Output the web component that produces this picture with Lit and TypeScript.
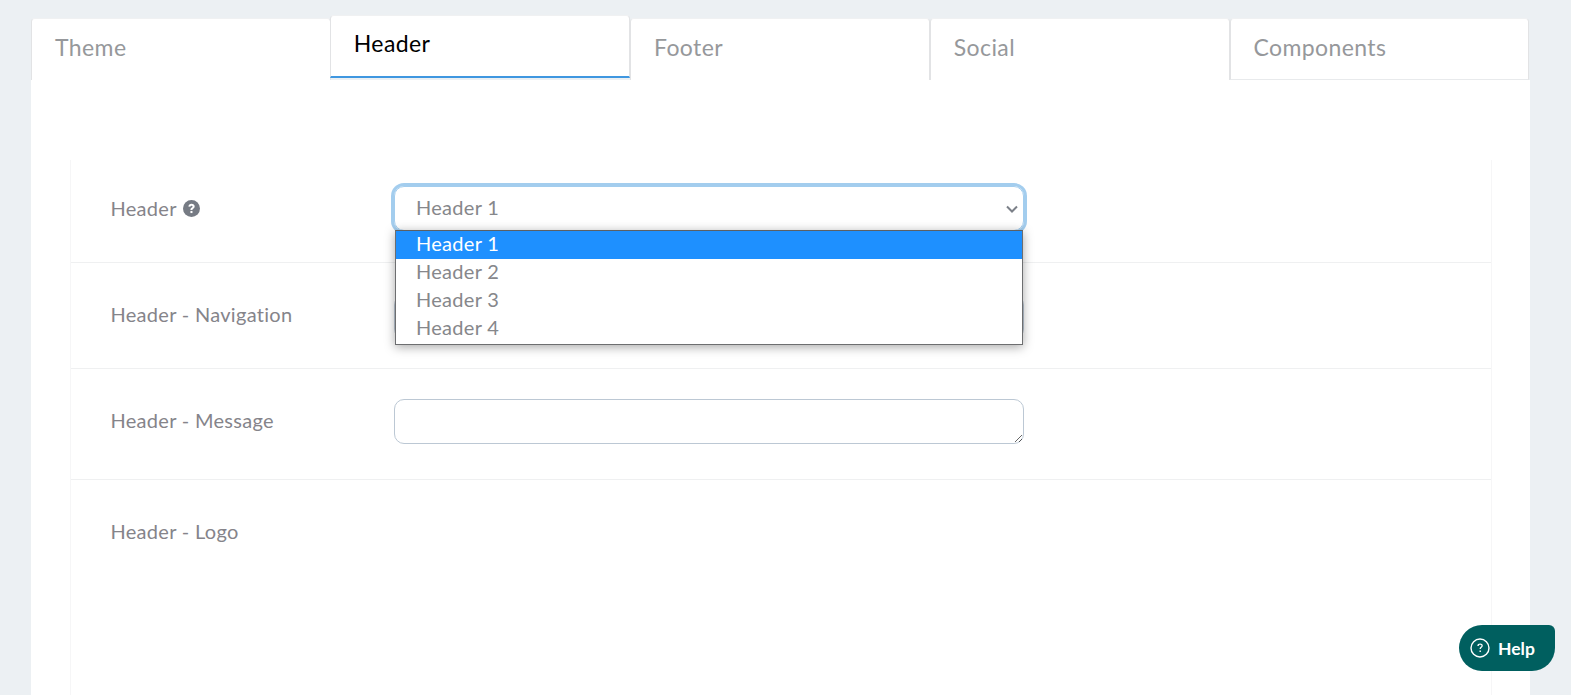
import { LitElement, html, css } from "lit";
import { customElement } from "lit/decorators.js";

const TABS = ["Theme", "Header", "Footer", "Social", "Components"];
const OPTIONS = ["Header 1", "Header 2", "Header 3", "Header 4"];

@customElement("app-root")
export class AppRoot extends LitElement {
  static styles = css`
    :host {
      display: block;
      height: 695px;
      overflow: hidden;
      background: #ecf0f3;
      font-family: Lato, "Open Sans", sans-serif;
      font-size: 20px;
      letter-spacing: 0.3px;
      color: #86878b;
      position: relative;
    }
    .page {
      padding: 15px 41px 0 31px;
    }
    .tabs {
      display: flex;
      align-items: flex-start;
      height: 65px;
    }
    .tab {
      flex: 0 0 299.75px;
      box-sizing: border-box;
      height: 62px;
      margin-top: 3px;
      padding: 14px 23px 0;
      background: #fff;
      border: 1px solid #e2e3e5;
      border-top-color: #f0f1f2;
      border-bottom: 0;
      border-radius: 4px 4px 0 0;
      font-size: 23px;
      letter-spacing: 0.4px;
      color: #96989b;
    }
    .tab.active {
      flex-basis: 300.25px;
      height: 63px;
      margin: 0 0 0 -1px;
      padding-top: 13px;
      color: #000;
      border-bottom: 2px solid #3f97e0;
      position: relative;
    }
    .tab:last-child {
      border-bottom: 1px solid #e8eaec;
    }
    .card {
      background: #fff;
      height: 620px;
      box-sizing: border-box;
      padding: 80px 38px 0 39px;
    }
    .form {
      border-left: 1px solid #f6f6f7;
      border-right: 1px solid #f6f6f7;
      height: 100%;
    }
    .row {
      display: flex;
      box-sizing: border-box;
      border-bottom: 1px solid #eff0f1;
      padding-left: 39.5px;
    }
    .row:last-child {
      border-bottom: 0;
    }
    .r1 { height: 103px; padding-top: 26px; }
    .r2 { height: 106px; padding-top: 32px; }
    .r3 { height: 111px; padding-top: 30px; }
    .r4 { padding-top: 39px; }
    .label {
      flex: 0 0 283.5px;
      display: flex;
      align-items: center;
      gap: 6px;
      height: 44px;
      color: #85848a;
    }
    .r2 .label { height: 38px; }
    .r3 .label { height: 42px; }
    .r4 .label { height: 24px; }
    .field {
      position: relative;
      width: 630px;
      box-sizing: border-box;
    }
    .select {
      box-sizing: border-box;
      height: 45px;
      padding: 0 21px 4px;
      display: flex;
      align-items: center;
      justify-content: space-between;
      border: 1px solid #a3cdee;
      border-radius: 10px;
      box-shadow: 0 0 0 3px #a3cdee;
      color: #86878b;
    }
    .select svg {
      margin: 4px -16px 0 0;
    }
    .plain {
      box-sizing: border-box;
      height: 44px;
      border: 1px solid #bcc8d4;
      border-radius: 10px;
    }
    textarea {
      display: block;
      box-sizing: border-box;
      width: 100%;
      height: 45px;
      margin: 0;
      border: 1px solid #bcc8d4;
      border-radius: 10px;
      outline: none;
      background: #fff;
    }
    .menu {
      position: absolute;
      left: 1px;
      top: 44px;
      width: 628px;
      box-sizing: border-box;
      padding-bottom: 1px;
      background: #fff;
      border: 1px solid #6d6e70;
      border-top-color: #5d6063;
      box-shadow: 0 2px 10px rgba(0, 0, 0, 0.35);
      z-index: 2;
    }
    .opt {
      height: 28px;
      line-height: 25px;
      padding-left: 20px;
      color: #86878b;
    }
    .opt.on {
      background: #1e90ff;
      color: #fff;
    }
    .help {
      position: absolute;
      left: 1459px;
      top: 625px;
      width: 96px;
      height: 46px;
      box-sizing: border-box;
      padding-left: 11px;
      display: flex;
      align-items: center;
      gap: 8px;
      background: #005f5f;
      border-radius: 23px 6px 23px 23px;
      color: #fff;
      font-weight: 700;
      font-size: 17.5px;
      letter-spacing: 0;
    }
  `;

  render() {
    return html`
      <div class="page">
        <div class="tabs">
          ${TABS.map(
            (t) => html`<div class="tab ${t === "Header" ? "active" : ""}">${t}</div>`
          )}
        </div>
        <div class="card">
          <div class="form">
            <div class="row r1">
              <div class="label">
                Header
                <svg width="17" height="17" viewBox="0 0 16 16">
                  <circle cx="8" cy="8" r="8" fill="#767b84" />
                  <path
                    d="M5 6.200C5.100 4.500 6.500 3.500 8 3.500c1.700 0 3 1 3 2.500 0 2-2.200 1.900-2.200 3.300H7c0-2.300 2-2.200 2-3.200 0-.5-.5-.8-1-.8-.6 0-1 .4-1.100 1.100z"
                    fill="#fff"
                  />
                  <rect x="7" y="10.300" width="1.900" height="2" fill="#fff" />
                </svg>
              </div>
              <div class="field">
                <div class="select">
                  Header 1
                  <svg width="12" height="8" viewBox="0 0 12 8">
                    <path d="M1 1.500 6 6.500l5-5" fill="none" stroke="#7b8088" stroke-width="2" />
                  </svg>
                </div>
                <div class="menu">
                  ${OPTIONS.map(
                    (o, i) => html`<div class="opt ${i === 0 ? "on" : ""}">${o}</div>`
                  )}
                </div>
              </div>
            </div>
            <div class="row r2">
              <div class="label">Header - Navigation</div>
              <div class="field"><div class="plain"></div></div>
            </div>
            <div class="row r3">
              <div class="label">Header - Message</div>
              <div class="field"><textarea></textarea></div>
            </div>
            <div class="row r4">
              <div class="label">Header - Logo</div>
            </div>
          </div>
        </div>
      </div>
      <div class="help">
        <svg width="20" height="20" viewBox="0 0 20 20">
          <circle cx="10" cy="10" r="9" fill="none" stroke="#fff" stroke-width="1.400" />
          <path
            d="M7.300 8c.1-1.600 1.300-2.400 2.800-2.400 1.500 0 2.700.8 2.700 2.200 0 1.900-2 1.800-2 3.200H9.500c0-2 2-2 2-3.200 0-.6-.6-1-1.400-1-.8 0-1.300.4-1.400 1.200z"
            fill="#fff"
          />
          <rect x="9.500" y="12.500" width="1.400" height="1.500" fill="#fff" />
        </svg>
        Help
      </div>
    `;
  }
}
